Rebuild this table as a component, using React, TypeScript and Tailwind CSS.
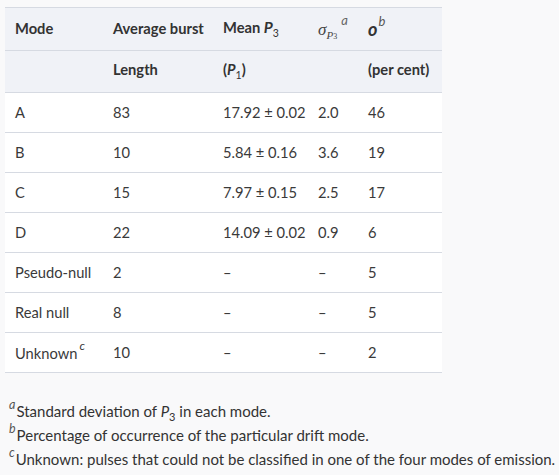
import React from "react";

const Sub = ({ children, size = "text-[10px]" }: { children: React.ReactNode; size?: string }) => (
  <span className={`${size} align-[-4px] leading-none`}>{children}</span>
);

const rows: [React.ReactNode, string, string, string, string][] = [
  ["A", "83", "17.92 ± 0.02", "2.0", "46"],
  ["B", "10", "5.84 ± 0.16", "3.6", "19"],
  ["C", "15", "7.97 ± 0.15", "2.5", "17"],
  ["D", "22", "14.09 ± 0.02", "0.9", "6"],
  ["Pseudo-null", "2", "–", "–", "5"],
  ["Real null", "8", "–", "–", "5"],
  [
    <span>
      Unknown
      <span className="italic text-[12px] align-[9px] ml-[2px] leading-none">c</span>
    </span>,
    "10",
    "–",
    "–",
    "2",
  ],
];

export default function App() {
  return (
    <div
      className="w-[559px] h-[475px] bg-[#f9f9fa] text-[#333333] pt-[7px] pl-[5px] overflow-hidden"
      style={{ fontFamily: "Lato, 'Open Sans', sans-serif" }}
    >
      <table className="w-[437px] border-collapse text-[14.7px] table-fixed">
        <colgroup>
          <col className="w-[98px]" />
          <col className="w-[110px]" />
          <col className="w-[95px]" />
          <col className="w-[50px]" />
          <col className="w-[84px]" />
        </colgroup>
        <thead className="bg-[#f0f2f7]">
          <tr className="h-[43px] border-t border-[#d6dae2] [&>th]:pb-[2px]">
            <th className="text-left font-bold pl-[10px]">Mode</th>
            <th className="text-left font-bold pl-[10px] whitespace-nowrap">Average burst</th>
            <th className="text-left font-bold pl-[10px] whitespace-nowrap">
              Mean <i className="text-[15.5px]">P</i>
              <Sub size="text-[10.5px] font-normal">3</Sub>
            </th>
            <th className="text-left font-normal pl-[10px] whitespace-nowrap">
              <span style={{ fontFamily: "'Liberation Serif', serif" }} className="italic text-[17px] text-[#444]">
                σ
                <span className="text-[11px] align-[-4px] leading-none">
                  P<span className="text-[8px] not-italic">3</span>
                </span>
              </span>
              <span className="italic text-[13px] align-[10px] ml-[4px] leading-none text-[#666]">a</span>
            </th>
            <th className="text-left font-bold pl-[10px] whitespace-nowrap">
              <i className="text-[18px] leading-none">o</i>
              <span className="italic font-normal text-[13px] align-[10px] ml-[1px] leading-none text-[#555]">b</span>
            </th>
          </tr>
          <tr className="h-[42px] border-t border-[#d6dae2] [&>th]:pb-[5px]">
            <th className="pl-[10px]"></th>
            <th className="text-left font-bold pl-[10px]">Length</th>
            <th className="text-left font-bold pl-[10px] whitespace-nowrap">
              (<i>P</i>
              <Sub size="text-[10.5px] font-normal">1</Sub>)
            </th>
            <th></th>
            <th className="text-left font-bold pl-[10px] whitespace-nowrap">(per cent)</th>
          </tr>
        </thead>
        <tbody className="bg-white">
          {rows.map((r, i) => (
            <tr key={i} className="h-[40px] border-t border-[#d6dae2] border-b">
              {r.map((c, j) => (
                <td key={j} className="pl-[10px] whitespace-nowrap text-[#3a3a3a]">
                  {c}
                </td>
              ))}
            </tr>
          ))}
        </tbody>
      </table>
      <div className="mt-[26px] pl-[4px] text-[15px] leading-[24px] text-[#333]">
        <p className="whitespace-nowrap h-[24px]">
          <span className="italic text-[12.5px] align-[8px] leading-none text-[#555] mr-[1px]">a</span>
          Standard deviation of <i>P</i>
          <Sub size="text-[11px]">3</Sub> in each mode.
        </p>
        <p className="whitespace-nowrap h-[24px]">
          <span className="italic text-[12.5px] align-[8px] leading-none text-[#555] mr-[1px]">b</span>
          Percentage of occurrence of the particular drift mode.
        </p>
        <p className="whitespace-nowrap h-[24px]">
          <span className="italic text-[12.5px] align-[8px] leading-none text-[#555] mr-[1px]">c</span>
          Unknown: pulses that could not be classified in one of the four modes of emission.
        </p>
      </div>
    </div>
  );
}
